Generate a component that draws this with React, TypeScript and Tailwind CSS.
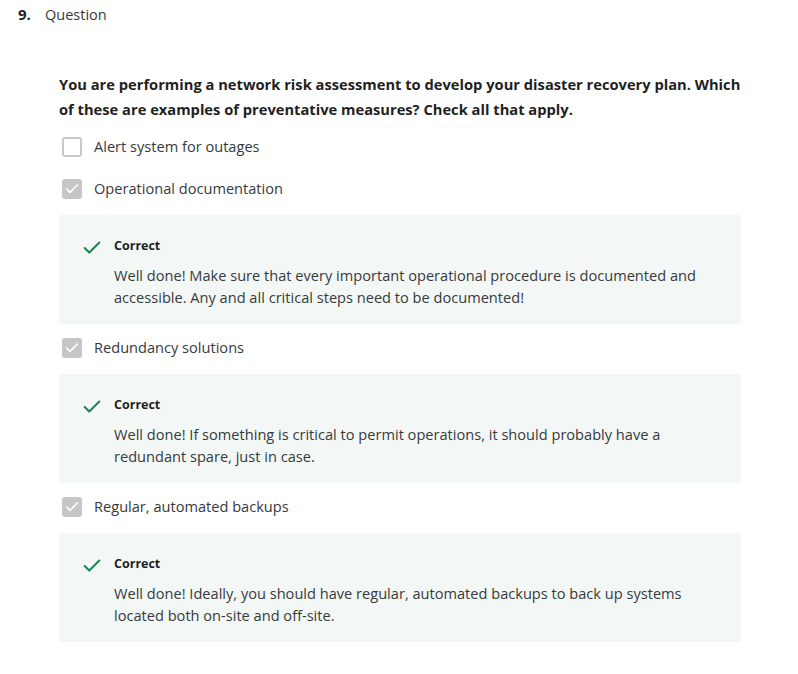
import { Check } from "lucide-react";

const options = [
  { label: "Alert system for outages", checked: false },
  {
    label: "Operational documentation",
    checked: true,
    feedback:
      "Well done! Make sure that every important operational procedure is documented and accessible. Any and all critical steps need to be documented!",
  },
  {
    label: "Redundancy solutions",
    checked: true,
    feedback:
      "Well done! If something is critical to permit operations, it should probably have a redundant spare, just in case.",
  },
  {
    label: "Regular, automated backups",
    checked: true,
    feedback:
      "Well done! Ideally, you should have regular, automated backups to back up systems located both on-site and off-site.",
  },
];

export default function App() {
  return (
    <div className="w-[798px] h-[674px] bg-white text-[#1f1f1f] font-['Open_Sans',sans-serif]">
      <div className="flex items-baseline pl-[18px] pt-[3px]">
        <span className="text-[15px] font-bold text-[#1f1f1f] w-[27px]">9.</span>
        <span className="text-[14.5px] text-[#373a3c]">Question</span>
      </div>

      <div className="pl-[59px] pr-[57px] pt-[46px]">
        <p className="text-[14.7px] font-bold leading-[25px] text-[#1f1f1f]">
          You are performing a network risk assessment to develop your disaster recovery plan. Which of these are examples of preventative measures? Check all that apply.
        </p>

        <div className="mt-[4px] flex flex-col">
          {options.map((o, i) => (
            <div key={i} className="flex flex-col">
              <div className="flex items-center h-[20px] my-[11px] pl-[3px]">
                {o.checked ? (
                  <span className="w-[20px] h-[20px] rounded-[3px] bg-[#c6c6c6] flex items-center justify-center">
                    <Check size={16} strokeWidth={2.5} color="#ffffff" />
                  </span>
                ) : (
                  <span className="w-[20px] h-[20px] rounded-[3px] border-2 border-[#c9c9c9] bg-white" />
                )}
                <span className="ml-[12px] text-[14.6px] text-[#373a3c]">{o.label}</span>
              </div>
              {o.feedback && (
                <div className="bg-[#f3f8f6] mt-[5px] mb-[3px] pl-[22px] pr-[30px] pt-[21px] pb-[16px] flex">
                  <Check size={22} strokeWidth={2.2} color="#1f8354" className="mt-[1px] shrink-0" />
                  <div className="ml-[11px]">
                    <div className="text-[12.5px] font-bold text-[#1f1f1f] leading-[20px]">Correct</div>
                    <p className="mt-[8px] text-[14.6px] leading-[22px] text-[#373a3c]">{o.feedback}</p>
                  </div>
                </div>
              )}
            </div>
          ))}
        </div>
      </div>
    </div>
  );
}
